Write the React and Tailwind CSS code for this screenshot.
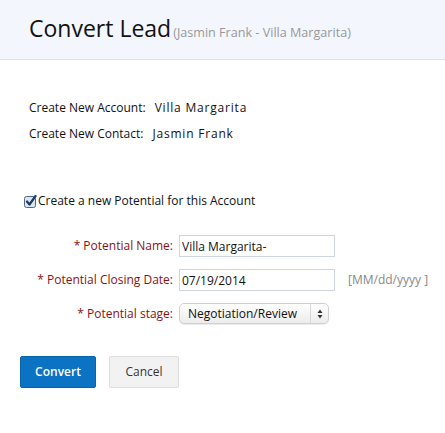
import React from 'react';

const font = { fontFamily: '"Open Sans", "Noto Sans", sans-serif' };

const CheckIcon = () => (
  <svg width="13" height="13" viewBox="0 0 13 13" className="shrink-0">
    <rect x="0.5" y="1.5" width="11" height="11" rx="2" fill="#dbe6f3" stroke="#55677e" />
    <path d="M3 6.5 L5.5 9.5 L11.5 1" fill="none" stroke="#1e3a66" strokeWidth="2.2" strokeLinecap="round" strokeLinejoin="round" />
  </svg>
);

const Row = ({ label, children }) => (
  <div className="flex items-center">
    <div className="w-[179px] pr-[6px] text-right text-[12px] text-[#8a1111]">* {label}:</div>
    {children}
  </div>
);

const App = () => {
  return (
    <div className="w-[445px] h-[433px] bg-white text-[#222]" style={font}>
      <div className="h-[60px] bg-[#f3f6fd] border-b border-[#dde1e8] flex items-end pb-[19px] pl-[29px]">
        <span className="text-[23px] leading-none text-[#111]">Convert Lead</span>
        <span className="text-[12.6px] text-[#999] ml-[2px] leading-none">(Jasmin Frank - Villa Margarita)</span>
      </div>

      <div className="pl-[29px] pt-[40px] text-[12px] text-[#111]">
        <div className="h-[16px] flex items-center">
          Create New Account:<span className="ml-[9px] tracking-[0.8px]">Villa Margarita</span>
        </div>
        <div className="h-[16px] mt-[10px] flex items-center">
          Create New Contact:<span className="ml-[9px] tracking-[0.8px]">Jasmin Frank</span>
        </div>
      </div>

      <div className="pl-[24px] mt-[51px] flex items-center gap-[1px] text-[12px] text-[#111] h-[16px]">
        <CheckIcon />
        <span>Create a new Potential for this Account</span>
      </div>

      <div className="mt-[26px] flex flex-col gap-[12px]">
        <Row label="Potential Name">
          <input
            readOnly
            value="Villa Margarita-"
            className="w-[156px] h-[22px] border border-[#cfd6e0] px-[2px] text-[12px] text-[#111] outline-none"
            style={font}
          />
        </Row>
        <Row label="Potential Closing Date">
          <input
            readOnly
            value="07/19/2014"
            className="w-[156px] h-[22px] border border-[#cfd6e0] px-[2px] text-[12px] text-[#111] outline-none"
            style={font}
          />
          <span className="ml-[13px] text-[12px] text-[#888]">[MM/dd/yyyy ]</span>
        </Row>
        <Row label="Potential stage">
          <div className="w-[150px] h-[21px] rounded-[5px] border border-[#d0d0d0] bg-gradient-to-b from-[#ffffff] to-[#ececec] flex items-center text-[12px] text-[#111] shadow-[0_1px_1px_rgba(0,0,0,0.08)]">
            <span className="flex-1 pl-[8px]">Negotiation/Review</span>
            <span className="w-[18px] h-full border-l border-[#d6d6d6] flex items-center justify-center">
              <svg width="6" height="10" viewBox="0 0 6 10">
                <path d="M3 0.5 L5.5 4 L0.5 4 Z" fill="#333" />
                <path d="M3 9.5 L5.5 6 L0.5 6 Z" fill="#333" />
              </svg>
            </span>
          </div>
        </Row>
      </div>

      <div className="pl-[20px] mt-[32px] flex gap-[13px]">
        <button className="w-[76px] h-[32px] rounded-[2px] bg-[#0b72c4] border border-[#0a65ad] text-white text-[12px] font-semibold" style={font}>
          Convert
        </button>
        <button className="w-[70px] h-[32px] rounded-[2px] bg-[#f2f2f2] border border-[#dcdcdc] text-[#333] text-[12px]" style={font}>
          Cancel
        </button>
      </div>
    </div>
  );
};

export default App;
